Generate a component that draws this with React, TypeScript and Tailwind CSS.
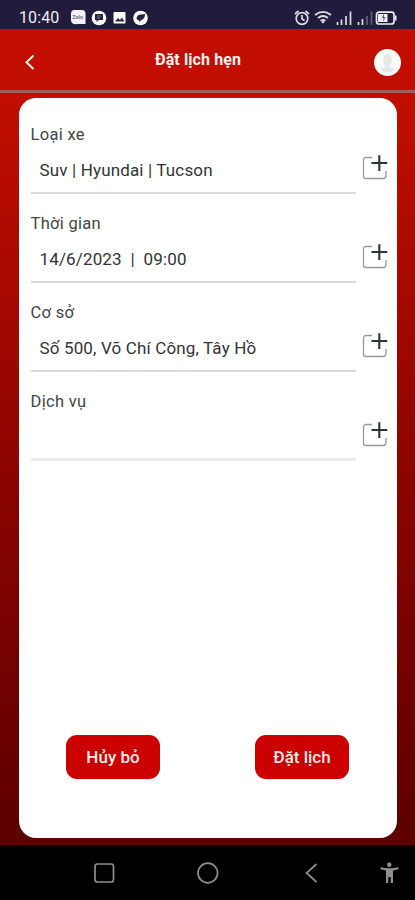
import React from "react";

type Field = { label: string; value: string; last?: boolean };

const fields: Field[] = [
  { label: "Loại xe", value: "Suv | Hyundai | Tucson" },
  { label: "Thời gian", value: "14/6/2023  |  09:00" },
  { label: "Cơ sở", value: "Số 500, Võ Chí Công, Tây Hồ" },
  { label: "Dịch vụ", value: "", last: true },
];

function AddIcon() {
  return (
    <svg width="26" height="28" viewBox="0 0 26 28" fill="none">
      <path d="M10 4.500H4.500Q1.500 4.500 1.500 7V23.500Q1.500 25.500 4 25.500H21Q24 25.500 24 22.500V18" stroke="#999" strokeWidth="1.300" />
      <path d="M9.500 10H25.300M17.300 2.300V18" stroke="#303236" strokeWidth="2.100" />
    </svg>
  );
}

function StatusBar() {
  return (
    <div className="flex h-[29px] shrink-0 items-start bg-[#211c3c] text-[#eeecf5]">
      <span className="ml-[19px] mt-[8px] w-[42px] whitespace-nowrap text-[16px] leading-[20px] tracking-[0.1px]">10:40</span>
      <svg className="ml-[9px] mt-[9px]" width="80" height="18" viewBox="0 0 80 18">
        <path d="M4 1H12Q15.500 1 15.500 5V15H8Q1 16 1 11V5Q1 1 4 1Z" fill="#f4f2f8" />
        <text x="2.200" y="10" fontSize="5.500" fontWeight="700" fill="#77738a">Zalo</text>
        <circle cx="29" cy="9" r="7.300" fill="#fff" />
        <path d="M25 5H33V11H29L26.500 13V11H25Z" fill="#292440" />
        <path d="M27 7H31M27 9H30" stroke="#77738a" />
        <rect x="43.500" y="3" width="12" height="11.500" rx="1" fill="#fff" />
        <path d="M45 12.500L48 9L50 11L52 8.500L54.500 12.500Z" fill="#292440" />
        <circle cx="70.500" cy="9" r="7.300" fill="#fff" />
        <path d="M66.500 8.500Q68 5 71 5.500L75 5Q75 10 71.500 11L69 13Q69.500 10.500 68 11Q66.500 11 66.500 8.500Z" fill="#292440" />
      </svg>
      <svg className="ml-auto mr-[17px] mt-[8px]" width="106" height="20" viewBox="0 0 106 20" fill="none">
        <g stroke="#dedce5" strokeWidth="1.700">
          <circle cx="10" cy="10.500" r="5.800" />
          <path d="M10 7V10.700L12.500 12.500M3 6L6.500 3M17 6L13.500 3" />
          <path d="M23 7Q31 .8 39 7M26 10Q31 6 36 10M28.500 12.800Q31 11 33.500 12.800" />
        </g>
        <circle cx="31" cy="14" r="1.300" fill="#dedce5" />
        <path d="M45.500 17V14M49.500 17V11.500M54 17V8M58.500 17V3.500M66.500 17V14M70.500 17V11" stroke="#dedce5" strokeWidth="1.700" />
        <path d="M75 17V8M79.500 17V3.500" stroke="#625e76" strokeWidth="1.700" />
        <rect x="84.500" y="4.200" width="17.500" height="11.800" rx="2.500" stroke="#eeecf2" strokeWidth="1.700" />
        <path d="M86 6H95.500V14H86Z" fill="#eeecf2" />
        <path d="M103 7.500H104.500V12.500H103Z" fill="#eeecf2" />
        <path d="M92 5.500L90 10H91.500L91 14L93.500 9H92Z" fill="#5e5970" />
      </svg>
    </div>
  );
}

export default function App() {
  return (
    <div className="flex h-[900px] w-[415px] flex-col overflow-hidden bg-black font-[Roboto,'Noto_Sans',sans-serif]">
      <StatusBar />
      <header className="flex h-[61px] shrink-0 items-center bg-[#c20e00]">
        <div className="flex w-[60px] pl-[24px] pt-[5px]">
          <svg width="12" height="18" viewBox="0 0 12 18" fill="none">
            <path d="M9.500 2.500L2.500 9.200L9.500 16" stroke="#fff1ec" strokeWidth="2" />
          </svg>
        </div>
        <h1 className="flex-1 whitespace-nowrap pr-[38px] text-center text-[16px] font-bold leading-[20px] tracking-[0.1px] text-[#fff1ef]">Đặt lịch hẹn</h1>
        <div className="mr-[14px] mt-[5px] flex size-[27px] items-center justify-center rounded-full bg-[#fbfbfb]">
          <svg width="23" height="23" viewBox="0 0 23 23" fill="#e6e9e6">
            <ellipse cx="11.500" cy="9" rx="4.500" ry="6" />
            <path d="M9 13H14V16Q18 16.500 18 19Q11.500 24 5 19Q5 16.500 9 16Z" />
          </svg>
        </div>
      </header>
      <main className="flex h-[755px] shrink-0 flex-col bg-linear-to-b from-[#c20e00] to-[#5c0000]">
        <div className="h-[3px] shrink-0 bg-[#a06058]" />
        <section className="ml-[18.500px] mr-[18px] mt-[5px] flex h-[739.500px] flex-col rounded-[17px] bg-white pl-[12px] pr-[10px] pt-[24px]">
          <div className="flex flex-col gap-[18px]">
            {fields.map((f) => (
              <div key={f.label} className="flex h-[71px] items-start justify-between">
                <div className="w-[325px]">
                  <div className="h-[25px] whitespace-nowrap text-[16.500px] leading-[25px] tracking-[0.3px] text-[#444]">{f.label}</div>
                  <div className="h-[45px] whitespace-pre pl-[9px] text-[17px] leading-[46px] tracking-[0.150px] text-[#333]">{f.value}</div>
                  <div className={f.last ? "-mt-px h-[3px] bg-[#ebebeb]" : "h-[1.500px] bg-[#d9d9d9]"} />
                </div>
                <div className="-mr-[0.500px] mt-[31px]"><AddIcon /></div>
              </div>
            ))}
          </div>
          <div className="mb-[58.500px] ml-[35.500px] mr-[38px] mt-auto flex justify-between">
            {["Hủy bỏ", "Đặt lịch"].map((t) => (
              <button key={t} className="h-[44px] w-[94px] whitespace-nowrap rounded-[11px] bg-[#cc0000] text-[17px] font-medium leading-[44px] text-[#ffe9e9]">{t}</button>
            ))}
          </div>
        </section>
      </main>
      <nav className="flex h-[55px] shrink-0 bg-black">
        <svg width="415" height="55" viewBox="0 -1 415 55" fill="none">
          <g stroke="#8e8e8e" strokeWidth="1.700">
            <rect x="95" y="18" width="18.500" height="18" rx="2.500" />
            <circle cx="207.800" cy="27" r="9.800" />
            <path d="M316.500 18L306.500 27L316.500 36" />
          </g>
          <circle cx="389.300" cy="18.800" r="2.200" fill="#8e8e8e" />
          <path d="M380.500 21.200Q389.500 23.500 398.500 21.200V23.200L393 24.500V37H390.700V31H388.300V37H386V24.500L380.500 23.200Z" fill="#8e8e8e" />
        </svg>
      </nav>
    </div>
  );
}
